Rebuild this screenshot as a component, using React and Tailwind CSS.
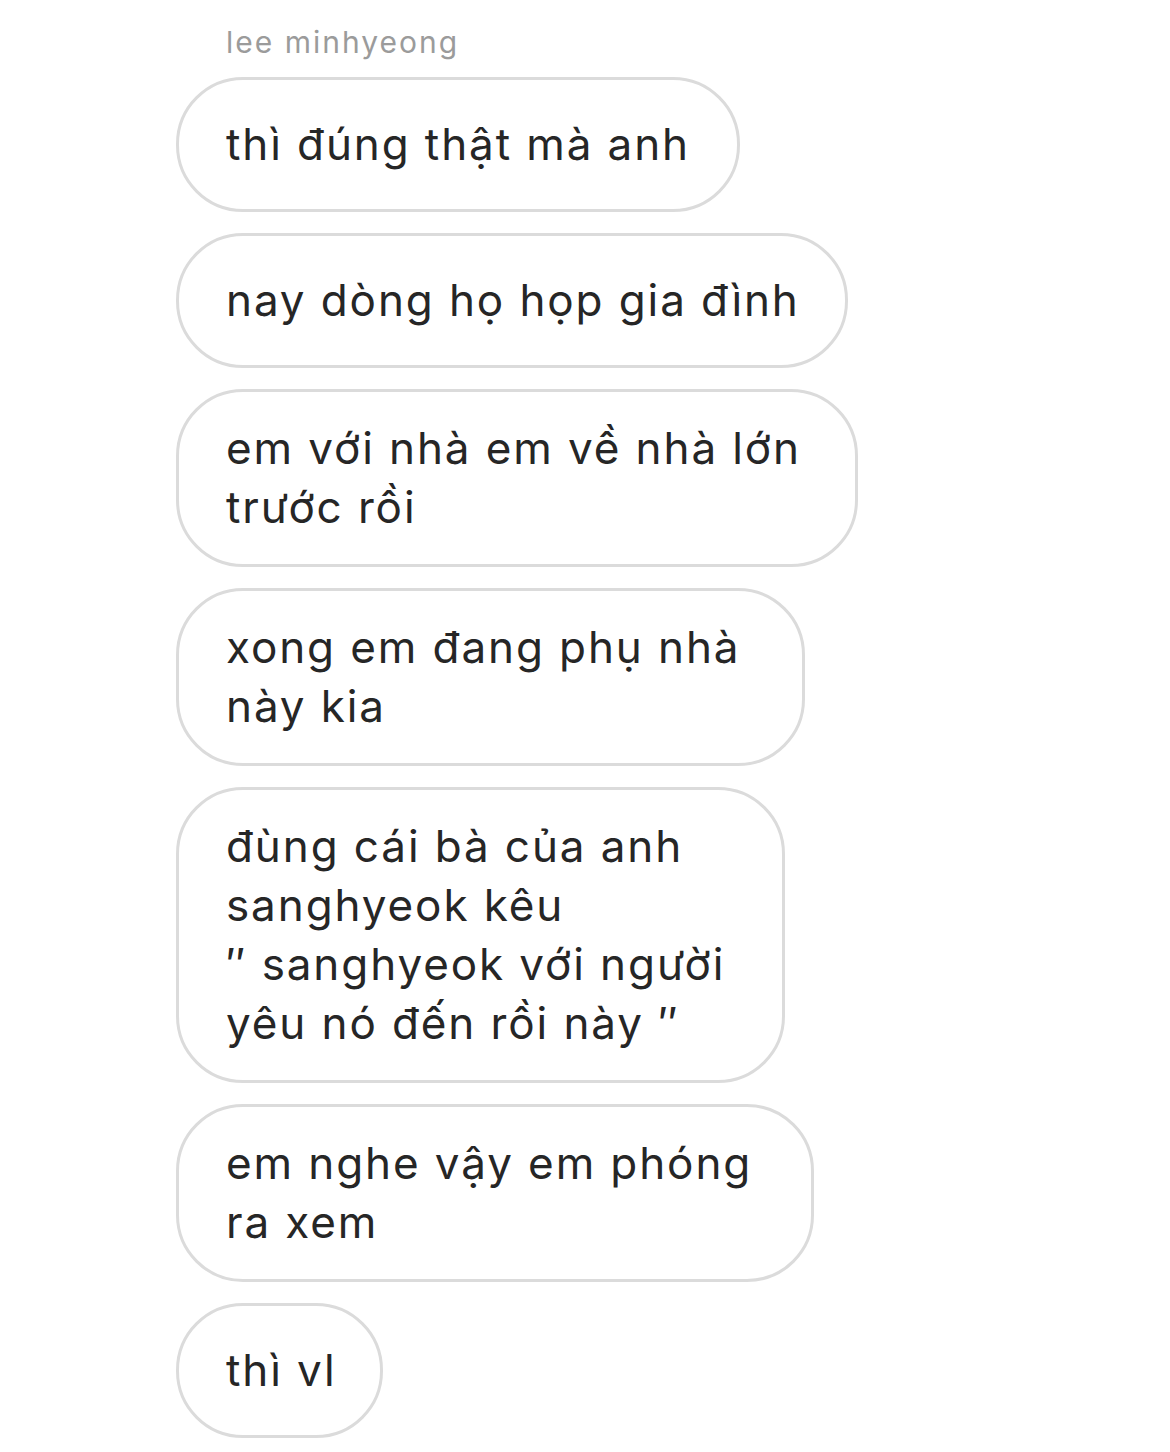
import React from 'react';

const messages = [
  { lines: ['thì đúng thật mà anh'], pr: 'pr-[47px]' },
  { lines: ['nay dòng họ họp gia đình'], pr: 'pr-[45px]' },
  { lines: ['em với nhà em về nhà lớn', 'trước rồi'], pr: 'pr-[54px]' },
  { lines: ['xong em đang phụ nhà', 'này kia'], pr: 'pr-[62px]' },
  { lines: ['đùng cái bà của anh', 'sanghyeok kêu', '″ sanghyeok với người', 'yêu nó đến rồi này ″'], pr: 'pr-[57px]' },
  { lines: ['em nghe vậy em phóng', 'ra xem'], pr: 'pr-[59px]' },
  { lines: ['thì vl'], pr: 'pr-[44px]' },
];

const Bubble = ({ lines, pr }) => (
  <div className={`w-fit min-h-[135px] flex items-center border-[3px] border-[#dbdbdb] rounded-[67px] pl-[47px] py-[27px] bg-white ${pr}`}>
    <p className="text-[44px] leading-[59px] tracking-[1.9px] text-[#262626] whitespace-nowrap">
      {lines.map((line, i) => (
        <span key={i} className="block">{line}</span>
      ))}
    </p>
  </div>
);

export default function App() {
  return (
    <div className="min-h-screen bg-white" style={{ fontFamily: 'Inter, "Noto Sans", sans-serif' }}>
      <div className="pl-[176px] pt-[22px]">
        {/* sender */}
        <div className="pl-[50px] text-[30px] leading-[40px] tracking-[2px] text-[#9b9b9b] mb-[15px]">lee minhyeong</div>

        {/* messages */}
        <div className="flex flex-col gap-[21px]">
          {messages.map((m, i) => (
            <Bubble key={i} lines={m.lines} pr={m.pr} />
          ))}
        </div>
      </div>
    </div>
  );
}
